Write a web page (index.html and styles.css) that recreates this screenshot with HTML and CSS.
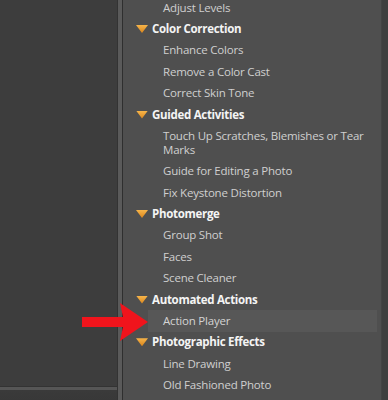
FILE: index.html
```html
<!DOCTYPE html>
<html lang="en">
<head>
    <meta charset="UTF-8">
    <meta name="viewport" content="width=device-width, initial-scale=1.0">
    <title>Guided Edits</title>
    <link rel="stylesheet" href="styles.css">
</head>
<body>
    <div class="workspace">
        <div class="canvas-area">
            <div class="canvas"></div>
            <div class="canvas-footer"></div>
        </div>
        <div class="splitter"></div>

        <div class="panel">
            <ul class="tree">
                <li class="item">Adjust Levels</li>

                <li class="group"><span class="twisty"></span>Color Correction</li>
                <li class="item">Enhance Colors</li>
                <li class="item">Remove a Color Cast</li>
                <li class="item">Correct Skin Tone</li>

                <li class="group"><span class="twisty"></span>Guided Activities</li>
                <li class="item">Touch Up Scratches, Blemishes or Tear Marks</li>
                <li class="item">Guide for Editing a Photo</li>
                <li class="item">Fix Keystone Distortion</li>

                <li class="group"><span class="twisty"></span>Photomerge</li>
                <li class="item">Group Shot</li>
                <li class="item">Faces</li>
                <li class="item">Scene Cleaner</li>

                <li class="group"><span class="twisty"></span>Automated Actions</li>
                <li class="item selected">Action Player</li>

                <li class="group"><span class="twisty"></span>Photographic Effects</li>
                <li class="item">Line Drawing</li>
                <li class="item">Old Fashioned Photo</li>
            </ul>
        </div>
        <div class="scroll-edge"></div>
    </div>

    <!-- annotation arrow drawn over the screenshot -->
    <svg class="callout" width="388" height="400" viewBox="0 0 388 400">
        <polygon points="82,317 123,317 120,303 148,322 120,341 123,327 82,327" fill="#f0141c"/>
    </svg>
</body>
</html>
```

FILE: styles.css
```css
* {
    margin: 0;
    padding: 0;
    box-sizing: border-box;
}

body {
    width: 388px;
    height: 400px;
    overflow: hidden;
    background: #3c3c3c;
    font-family: 'Open Sans', 'Liberation Sans', sans-serif;
    position: relative;
}

.workspace {
    display: flex;
    height: 400px;
}

.canvas-area {
    width: 117px;
    display: flex;
    flex-direction: column;
    background: #3d3d3d;
}

.canvas {
    flex: 1;
}

.canvas-footer {
    height: 14px;
    border-top: 1px solid #333;
    background: linear-gradient(#565656 0, #565656 3px, #3a3a3a 3px, #383838 100%);
}

.splitter {
    width: 6px;
    background: #5a5a5a;
    border-left: 1px solid #333;
    border-right: 1px solid #2f2f2f;
}

.panel {
    flex: 1;
    background: #4f4f4f;
    overflow: hidden;
}

.scroll-edge {
    width: 7px;
    background: #3f3f3f;
    border-left: 1px solid #444;
}

.tree {
    list-style: none;
    margin-top: -3px;
}

.tree li {
    font-size: 11.5px;
    line-height: 14px;
    padding: 3.7px 0;
}

.group {
    display: flex;
    align-items: center;
    padding-left: 13px !important;
    color: #f4f4f4;
    font-weight: bold;
    letter-spacing: -0.3px;
}

.twisty {
    width: 12px;
    height: 8px;
    margin-right: 4px;
    background: linear-gradient(#f7b54a, #d9851c);
    clip-path: polygon(0 0, 100% 0, 50% 100%);
}

.item {
    margin: 0 4px 0 25px;
    padding-left: 15px !important;
    padding-right: 4px !important;
    color: #cfcfcf;
    letter-spacing: -0.2px;
}

.item.selected {
    background: #575757;
    color: #d4d4d4;
}

.callout {
    position: absolute;
    left: 0;
    top: 0;
    pointer-events: none;
}
```
